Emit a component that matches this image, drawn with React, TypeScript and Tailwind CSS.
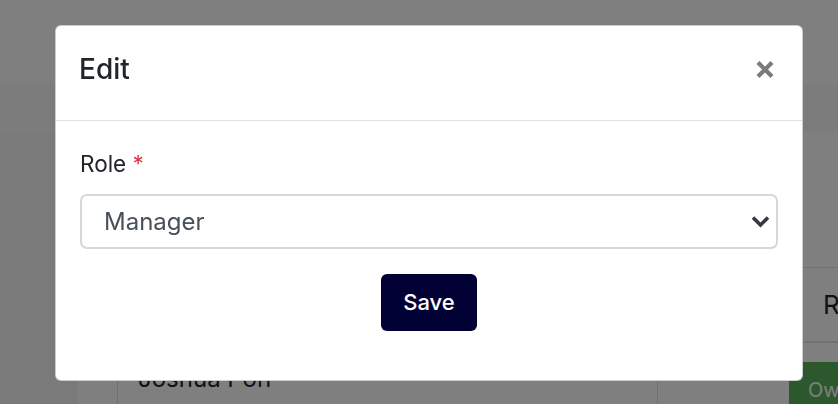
import React from "react";

function CloseIcon() {
  return (
    <svg width="20" height="19" viewBox="0 0 20 19" fill="none">
      <path d="M3 2.5L17 16.5M17 2.5L3 16.5" stroke="#7b7b7b" strokeWidth="4.2" strokeLinecap="butt" />
    </svg>
  );
}

function Chevron() {
  return (
    <svg width="19" height="13" viewBox="0 0 19 13" fill="none">
      <path d="M2 2.5L9.5 10L17 2.5" stroke="#343a40" strokeWidth="3.6" />
    </svg>
  );
}

export default function App() {
  return (
    <div className="relative w-[838px] h-[404px] overflow-hidden bg-[#f4f4f4] font-['Inter','Liberation_Sans',sans-serif] text-[#212529]">
      {/* page behind */}
      <div className="h-[84px] bg-white shadow-[0_2px_4px_rgba(0,0,0,0.12)]" />
      <div className="h-[49px] bg-[#f8f8f8]" />
      <div className="pl-[78px]">
        <div className="bg-white w-[900px] h-[400px] pt-[134px]">
          <div className="grid grid-cols-[39px_540px_112px_1fr] border-t border-[#dee2e6]">
            <div className="h-[75px] border-b-2 border-[#dee2e6]" />
            <div className="h-[75px] border-b-2 border-l border-[#dee2e6] pl-[20px] flex items-center text-[24px] font-semibold">Name</div>
            <div className="h-[75px] border-b-2 border-l border-[#dee2e6]" />
            <div className="h-[75px] border-b-2 border-l border-[#dee2e6] pl-[53px] flex items-center text-[26px]">Role</div>
            <div />
            <div className="border-l border-[#dee2e6] pl-[20px] pt-[18px] text-[24px] leading-[36px]">Joshua Poh</div>
            <div className="border-l border-[#dee2e6]" />
            <div className="pt-[19px] pl-[20px]">
              <span className="inline-block bg-[#5aae58] text-white text-[20px] pl-[19px] pr-[20px] pt-[14px] pb-[8px] leading-[28px]">Owner</span>
            </div>
          </div>
        </div>
      </div>

      {/* modal */}
      <div className="fixed inset-0 bg-black/50">
        <div className="ml-[55px] mt-[25px] w-[748px] bg-white border border-black/20 rounded-[6px]">
          <div className="h-[95px] border-b border-[#dee2e6] flex items-start justify-between pl-[23px] pr-[27px] pt-[29px]">
            <h5 className="text-[28px] leading-none font-medium text-[#212529]">Edit</h5>
            <button className="mt-[5px]">
              <CloseIcon />
            </button>
          </div>
          <div className="px-[24px] pt-[26px] pb-[49px]">
            <label className="block text-[22.5px] leading-[33px] mb-[14px] text-[#212529]">
              Role <span className="text-[#dc3545]">*</span>
            </label>
            <div className="h-[55px] border-2 border-[#d4d8dc] rounded-[7px] flex items-center justify-between pl-[22px] pr-[6px] text-[24px] text-[#495057]">
              <span>Manager</span>
              <Chevron />
            </div>
            <div className="flex justify-center mt-[25px]">
              <button className="w-[96px] h-[57px] rounded-[6px] bg-[#010136] text-white text-[22px] font-medium">
                Save
              </button>
            </div>
          </div>
        </div>
      </div>
    </div>
  );
}
